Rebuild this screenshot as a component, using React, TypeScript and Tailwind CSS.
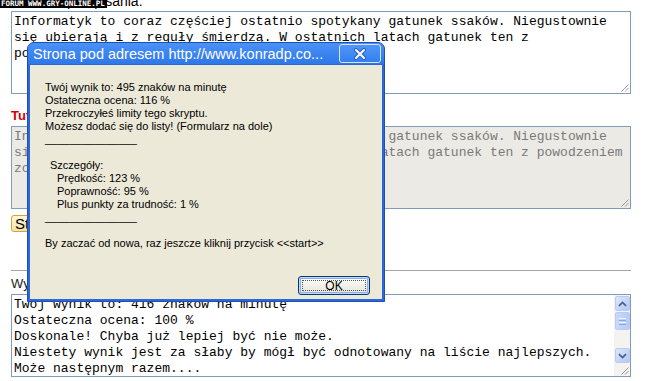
import React from "react";

const mono = "font-['Liberation_Mono','Courier_New',monospace] text-[13px] leading-[16px]";

const source = [
  "Informatyk to coraz częściej ostatnio spotykany gatunek ssaków. Niegustownie",
  "się ubierają i z reguły śmierdzą. W ostatnich latach gatunek ten z",
  "powodzeniem opanował Internet.",
];

const typed = [
  "Informatyk to coraz częściej ostatnio spotykany gatunek ssaków. Niegustownie",
  "się ubierają i z reguły śmierdzą. W ostatnich latach gatunek ten z powodzeniem",
  "zostawia ślady w sieci.",
];

const result = [
  "Twój wynik to: 416 znaków na minutę",
  "Ostateczna ocena: 100 %",
  "Doskonale! Chyba już lepiej być nie może.",
  "Niestety wynik jest za słaby by mógł być odnotowany na liście najlepszych.",
  "Może następnym razem....",
];

const alertLines = [
  { text: "Twój wynik to: 495 znaków na minutę", indent: 0 },
  { text: "Ostateczna ocena: 116 %", indent: 0 },
  { text: "Przekroczyłeś limity tego skryptu.", indent: 0 },
  { text: "Możesz dodać się do listy! (Formularz na dole)", indent: 0 },
  { text: "_______________", indent: 0 },
  { text: "", indent: 0 },
  { text: "Szczegóły:", indent: 5 },
  { text: "Prędkość: 123 %", indent: 12 },
  { text: "Poprawność: 95 %", indent: 12 },
  { text: "Plus punkty za trudność: 1 %", indent: 12 },
  { text: "_______________", indent: 0 },
  { text: "", indent: 0 },
  { text: "By zaczać od nowa, raz jeszcze kliknij przycisk <<start>>", indent: 0 },
];

function Grip() {
  return (
    <svg className="absolute right-[1px] bottom-[1px]" width="9" height="9" viewBox="0 0 9 9">
      <path d="M8.5 1.5 L1.5 8.5 M8.5 5 L5 8.5" stroke="#9a9a9a" strokeWidth="1" />
    </svg>
  );
}

function ScrollBtn({ down }: { down?: boolean }) {
  return (
    <div className="h-[15px] w-[15px] rounded-[2px] border border-[#b9cbf5] bg-gradient-to-br from-[#dce6fd] to-[#b3c7f5] flex items-center justify-center">
      <svg width="9" height="6" viewBox="0 0 9 6">
        <path
          d={down ? "M1 1.2 L4.5 4.6 L8 1.2" : "M1 4.8 L4.5 1.4 L8 4.8"}
          fill="none"
          stroke="#4d6185"
          strokeWidth="1.8"
        />
      </svg>
    </div>
  );
}

function Scrollbar() {
  return (
    <div className="w-[16px] shrink-0 flex flex-col bg-[#f4f3ef] pt-[1px] pl-px">
      <ScrollBtn />
      <div className="mt-[1px] h-[18px] w-[15px] rounded-[2px] border border-[#b9cbf5] bg-gradient-to-r from-[#c9d8fc] to-[#b8cbf6] flex flex-col items-center justify-center gap-[1px]">
        <div className="h-px w-[7px] bg-[#eef3fe]" />
        <div className="h-px w-[7px] bg-[#8ca5de]" />
        <div className="h-px w-[7px] bg-[#eef3fe]" />
        <div className="h-px w-[7px] bg-[#8ca5de]" />
      </div>
      <div className="h-[18px]" />
      <ScrollBtn down />
    </div>
  );
}

function Dialog() {
  return (
    <div className="absolute left-[27px] top-[42px] w-[358px] h-[260px] flex flex-col rounded-t-[7px] border border-[#1c4fba] bg-[#2d68d9] font-['Liberation_Sans',Arial,sans-serif]">
      <div className="h-[21px] shrink-0 flex items-center justify-between rounded-t-[6px] bg-gradient-to-b from-[#4a92f7] to-[#2e77e8] pl-[5px] pr-[3px]">
        <span className="text-white text-[14.5px] leading-[18px] whitespace-nowrap">
          Strona pod adresem http://www.konradp.co...
        </span>
        <div className="h-[19px] w-[42px] rounded-[3px] border border-[#d6e3fb] bg-gradient-to-b from-[#4f96f8] to-[#3580ee] flex items-center justify-center">
          <svg width="14" height="12" viewBox="0 0 14 12">
            <path d="M3 2 L11 10 M11 2 L3 10" stroke="#2a5fc9" strokeWidth="4" strokeLinecap="round" />
            <path d="M3 2 L11 10 M11 2 L3 10" stroke="#ffffff" strokeWidth="2" strokeLinecap="round" />
          </svg>
        </div>
      </div>
      <div className="flex-1 mx-[2px] mb-[2px] mt-px bg-[#ece9d8] pl-[15px] pt-[16px] flex flex-col">
        <div className="text-[11px] leading-[13px] text-black">
          {alertLines.map((l, i) => (
            <div key={i} className="h-[13px] whitespace-pre" style={{ paddingLeft: l.indent }}>
              {l.text}
            </div>
          ))}
        </div>
        <div className="mt-[26px] flex justify-end pr-[12px]">
          <div className="relative h-[19px] w-[72px] rounded-[3px] border border-[#003c74] bg-gradient-to-b from-white to-[#e6e3d6] shadow-[inset_0_0_0_1px_#c2d5f7,inset_0_0_0_2px_#8fb0eb] flex items-center justify-center text-[12px] text-black">
            OK
            <div className="absolute inset-[3px] border border-dotted border-[#555]" />
          </div>
        </div>
      </div>
    </div>
  );
}

export default function App() {
  return (
    <div className="relative w-[645px] h-[381px] overflow-hidden bg-white font-['Liberation_Sans',Arial,sans-serif]">
      <div className="pl-[11px]">
        <div className="h-[11px] overflow-hidden flex items-end">
          <span className="mb-[2px] text-[14px] leading-[16px] text-black whitespace-nowrap">Tekst do przepisania:</span>
        </div>

        <div className={`relative h-[83px] w-[620px] border border-[#7f9db9] bg-white px-[2px] pt-[2px] text-black ${mono}`}>
          {source.map((l, i) => (
            <div key={i} className="whitespace-pre">{l}</div>
          ))}
          <Grip />
        </div>

        <div className="mt-[14px] mb-[3px] text-[13px] leading-[15px] font-bold text-[#d40000]">Tutaj przepisz tekst:</div>

        <div className={`relative h-[83px] w-[620px] border border-[#7f9db9] bg-[#ebeae4] px-[2px] pt-[2px] text-[#7a7a7a] ${mono}`}>
          {typed.map((l, i) => (
            <div key={i} className="whitespace-pre">{l}</div>
          ))}
          <Grip />
        </div>

        <div className="mt-[6px] flex">
          <div className="h-[17px] rounded-[3px] border border-[#d9a42b] bg-gradient-to-b from-[#fff6d8] to-[#f2e3b0] px-[3px] flex items-center text-[15px] leading-none text-black">
            Start
          </div>
        </div>

        <div className="mt-[38px] h-px w-[620px] bg-[#a3a3a3]" />

        <div className="mt-[5px] mb-[3px] text-[13px] leading-[15px] text-[#222]">Wynik:</div>

        <div className="relative h-[83px] w-[620px] border border-[#7f9db9] bg-white flex">
          <div className={`flex-1 px-[2px] pt-[2px] overflow-hidden text-black ${mono}`}>
            {result.map((l, i) => (
              <div key={i} className="whitespace-pre">{l}</div>
            ))}
          </div>
          <Scrollbar />
          <Grip />
        </div>
      </div>

      <div className="absolute left-0 top-0 h-[8px] w-[107px] bg-black pl-[1px] text-white font-['DejaVu_Sans_Mono',monospace] font-bold text-[7.5px] leading-[8px] whitespace-nowrap">
        FORUM WWW.GRY-ONLINE.PL
      </div>

      <Dialog />
    </div>
  );
}
